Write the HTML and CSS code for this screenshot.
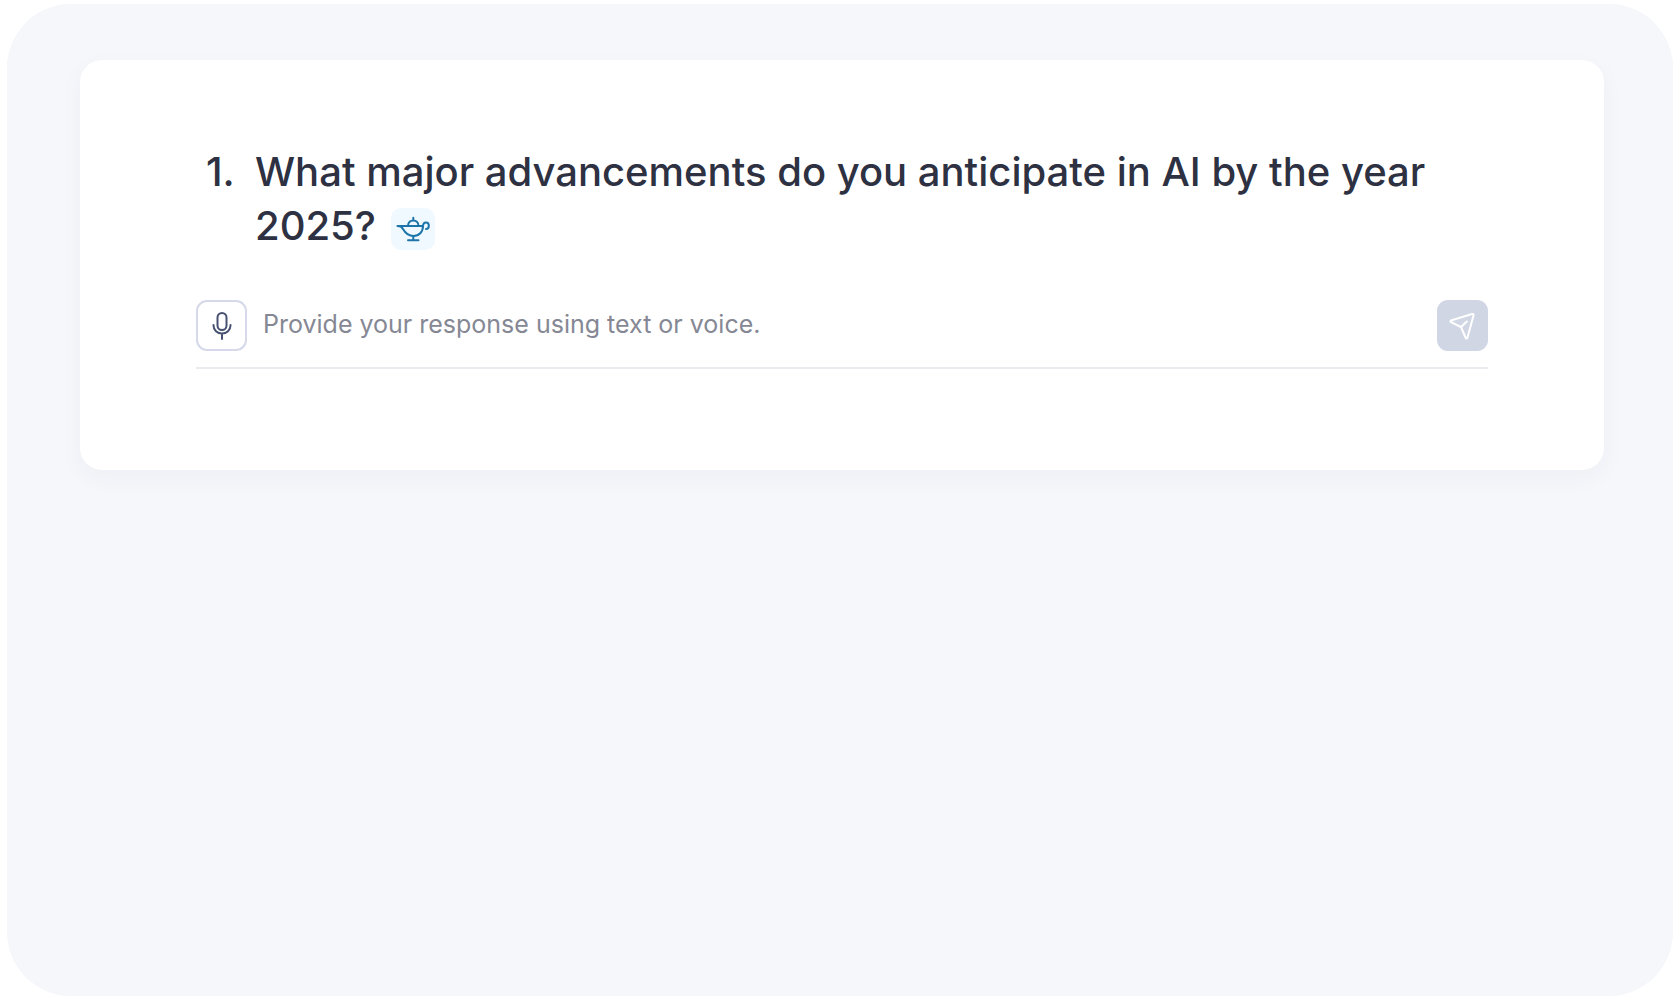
FILE: index.html
```
<!DOCTYPE html>
<html lang="en">
<head>
    <meta charset="UTF-8">
    <meta name="viewport" content="width=device-width, initial-scale=1.0">
    <title>Survey</title>
    <link rel="stylesheet" href="styles.css">
</head>
<body>
    <main class="survey">
        <section class="card">
            <div class="question">
                <span class="question-number">1.</span>
                <h1 class="question-text" id="question-text">What major advancements do you anticipate in AI by the year 2025?
                    <span class="badge">
                        <svg width="34" height="26" viewBox="0 0 34 26">
                            <path d="M1.500 10H27c0 6-4 10-9.500 10S9 16.500 7 13c-1-2-3-3-5.500-3z"/>
                            <path d="M12 10c0-7.500 10.500-7.500 10.500 0M17.300 4V1.800M17.300 20v4.200M12 24.200h10.500"/>
                            <path d="M27 10.500c0-2.500 1-4 3-4 3.800 0 3.800 6.500 0 6.500"/>
                        </svg>
                    </span>
                </h1>
            </div>

            <form class="response">
                <button type="button" class="icon-button mic-button" aria-label="Record your response">
                    <svg width="20" height="28" viewBox="0 0 20 28">
                        <rect x="5.500" y="1" width="9" height="17" rx="4.500"/>
                        <path d="M1.500 13v.5a8.500 8 0 0 0 17 0V13M10 21.500V27"/>
                    </svg>
                </button>
                <input type="text" class="response-input" placeholder="Provide your response using text or voice." aria-labelledby="question-text">
                <button type="submit" class="icon-button send-button" aria-label="Send">
                    <svg width="28" height="28" viewBox="0 0 28 28">
                        <path d="M2 8.500L23 2q2-.5 1.500 1.500l-6 22q-1 2-2 0L12 15 2 10.200q-1-1 0-1.700z"/>
                        <path d="M12 15l5.800-5.500"/>
                    </svg>
                </button>
            </form>
        </section>
    </main>
</body>
</html>
```
FILE: styles.css
```
/* General Styles */
* {
    box-sizing: border-box;
}

body {
    margin: 0;
    min-height: 100vh;
    padding: 4px 3px 4px 7px;
    display: flex;
    background-color: #fff;
    font-family: Inter, "Liberation Sans", sans-serif;
}

.survey {
    flex: 1;
    padding: 56px 69px 56px 73px;
    border-radius: 64px;
    background-color: #f5f7fb;
}

/* Card */
.card {
    padding: 85px 116px 101px;
    border-radius: 22px;
    background-color: #fff;
    box-shadow: 0 8px 24px rgba(45, 50, 70, 0.04);
}

/* Question */
.question {
    display: flex;
    padding-left: 10px;
    color: #2d3142;
    font-size: 40px;
    font-weight: 500;
    line-height: 54px;
}

.question-number {
    width: 49px;
}

.question-text {
    flex: 1;
    margin: 0;
    font-size: inherit;
    font-weight: inherit;
}

.badge {
    display: inline-flex;
    align-items: center;
    justify-content: center;
    width: 44px;
    height: 42px;
    margin-left: 4px;
    border-radius: 10px;
    background-color: #f0f9ff;
    vertical-align: middle;
}

svg {
    fill: none;
    stroke: currentColor;
    stroke-width: 2;
    stroke-linecap: round;
    stroke-linejoin: round;
}

.badge svg {
    color: #1c74a9;
}

/* Response */
.response {
    display: flex;
    align-items: center;
    gap: 16px;
    margin-top: 47px;
    padding-bottom: 16px;
    border-bottom: 2px solid #e9eaee;
}

.icon-button {
    display: flex;
    align-items: center;
    justify-content: center;
    width: 51px;
    height: 51px;
    padding: 0;
    border: none;
    border-radius: 11px;
    cursor: pointer;
}

.mic-button {
    border: 2px solid #d5d9e9;
    background-color: #fff;
    color: #475273;
}

.send-button {
    background-color: #d1d6e5;
    color: #fff;
}

.response-input {
    flex: 1;
    min-width: 0;
    padding: 0 0 4px;
    border: none;
    outline: none;
    background: none;
    color: #2d3142;
    font-family: inherit;
    font-size: 25px;
}

.response-input::placeholder {
    color: #858894;
    opacity: 1;
}
```
